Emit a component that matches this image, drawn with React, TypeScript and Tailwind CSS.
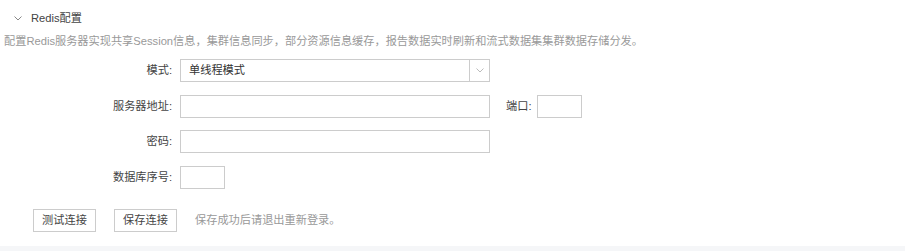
const font = { fontFamily: '"Liberation Sans", "Noto Sans CJK SC", sans-serif' };

const Chevron = ({ className }: { className: string }) => (
    <svg viewBox="0 0 8 5" className={className} fill="none" stroke="currentColor" strokeWidth="1">
        <polyline points="0.5,0.5 4,4 7.5,0.5" />
    </svg>
);

const Label = ({ children }: { children: React.ReactNode }) => (
    <div className="w-[180px] pr-[8px] text-right text-[11.2px] text-[#444]">{children}</div>
);

export default function App() {
    return (
        <div className="w-[905px] h-[251px] bg-white flex flex-col" style={font}>
            <div className="flex-1">
                {/* Section header */}
                <div className="flex items-center h-[16px] mt-[10px] pl-[14px] text-[11.2px] text-[#444]">
                    <Chevron className="w-[8px] h-[5px] text-[#888]" />
                    <span className="ml-[9px] leading-[16px]">Redis配置</span>
                </div>
                <p className="mt-[7px] pl-[4px] text-[11.2px] leading-[16px] text-[#999]">
                    配置Redis服务器实现共享Session信息，集群信息同步，部分资源信息缓存，报告数据实时刷新和流式数据集集群数据存储分发。
                </p>

                {/* Form */}
                <div className="mt-[10px] flex flex-col">
                    <div className="flex items-center h-[23px]">
                        <Label>模式:</Label>
                        <div className="flex w-[310px] h-[23px] border border-[#ccc] text-[11.2px] text-[#333]">
                            <div className="flex-1 flex items-center pl-[8px]">单线程模式</div>
                            <div className="w-[20px] border-l border-[#ccc] flex items-center justify-center">
                                <Chevron className="w-[8px] h-[5px] text-[#bbb]" />
                            </div>
                        </div>
                    </div>
                    <div className="flex items-center h-[23px] mt-[13px]">
                        <Label>服务器地址:</Label>
                        <div className="w-[310px] h-[23px] border border-[#ccc]" />
                        <div className="ml-[16px] text-[11.2px] text-[#444]">端口:</div>
                        <div className="ml-[6px] w-[45px] h-[23px] border border-[#ccc]" />
                    </div>
                    <div className="flex items-center h-[23px] mt-[12px]">
                        <Label>密码:</Label>
                        <div className="w-[310px] h-[23px] border border-[#ccc]" />
                    </div>
                    <div className="flex items-center h-[23px] mt-[13px]">
                        <Label>数据库序号:</Label>
                        <div className="w-[45px] h-[23px] border border-[#ccc]" />
                    </div>
                </div>

                {/* Actions */}
                <div className="flex items-center mt-[20px] pl-[33px]">
                    <button className="w-[63px] h-[23px] border border-[#ccc] bg-white text-[11.2px] text-[#444]">测试连接</button>
                    <button className="ml-[18px] w-[63px] h-[23px] border border-[#ccc] bg-white text-[11.2px] text-[#444]">保存连接</button>
                    <span className="ml-[18px] text-[11.2px] text-[#999]">保存成功后请退出重新登录。</span>
                </div>
            </div>
            <div className="h-[5px] bg-[#f5f6f8]" />
        </div>
    );
}
